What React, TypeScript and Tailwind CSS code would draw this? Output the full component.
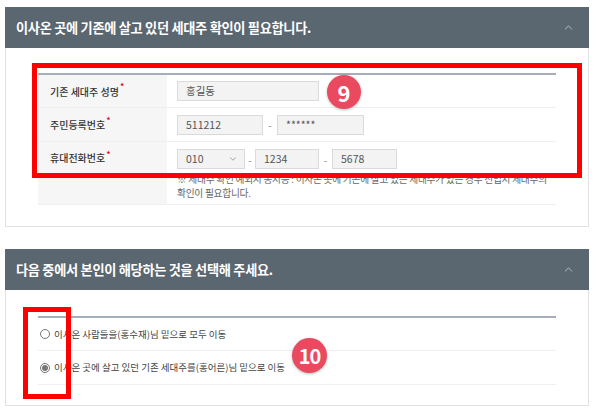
import { ChevronDown, ChevronUp } from "lucide-react";

const font = { fontFamily: '"Noto Sans CJK KR", "Noto Sans", sans-serif' };

const Req = () => <span className="relative -top-[4px] ml-[1px] text-[9px] text-[#e60012]">*</span>;

const Field = ({ value, w }: { value: string; w: string }) => (
  <div className={`${w} flex h-[20px] items-center border border-[#dadada] bg-[#f3f3f3] pl-[8px] text-[10.5px] text-[#555]`}>
    {value}
  </div>
);

const Dash = ({ cls }: { cls: string }) => <span className={`${cls} text-center text-[10px] text-[#888]`}>-</span>;

const PanelHeader = ({ title }: { title: string }) => (
  <div className="flex h-[41px] items-center justify-between bg-[#5a6670] pl-[11px] pr-[14px]">
    <span className="text-[13.2px] font-bold tracking-[-0.3px] text-white">{title}</span>
    <ChevronUp size={13} strokeWidth={1.5} className="text-[#c9cfd4]" />
  </div>
);

export default function App() {
  return (
    <div className="relative h-[419px] w-[603px] overflow-hidden bg-white" style={font}>
      <div className="ml-[5px] w-[584px] pt-[7px]">
        {/* 세대주 확인 */}
        <PanelHeader title="이사온 곳에 기존에 살고 있던 세대주 확인이 필요합니다." />
        <div className="border border-t-0 border-[#e2e2e2] pb-[21px] pl-[32px] pt-[25px]">
          <div className="w-[518px] border-t-2 border-[#a5aebb]">
            <div className="flex h-[33px] border-b border-[#efefef]">
              <div className="flex w-[129px] shrink-0 items-center bg-[#f6f6f6] pl-[12px] text-[10px] font-medium text-[#333]">
                기존 세대주 성명<Req />
              </div>
              <div className="flex flex-1 items-center pl-[10px]">
                <Field value="홍길동" w="w-[142px]" />
              </div>
            </div>
            <div className="flex h-[34px] border-b border-[#efefef]">
              <div className="flex w-[129px] shrink-0 items-center bg-[#f6f6f6] pl-[12px] text-[10px] font-medium text-[#333]">
                주민등록번호<Req />
              </div>
              <div className="flex flex-1 items-center pl-[10px]">
                <Field value="511212" w="w-[86px]" />
                <Dash cls="w-[14px]" />
                <Field value="******" w="w-[87px]" />
              </div>
            </div>
            <div className="flex h-[63px] border-b border-[#efefef]">
              <div className="w-[129px] shrink-0 bg-[#f6f6f6] pl-[12px] pt-[8px] text-[10px] font-medium leading-[16px] text-[#333]">
                휴대전화번호<Req />
              </div>
              <div className="min-w-0 flex-1 pl-[10px] pt-[7px]">
                <div className="flex items-center">
                  <div className="flex h-[20px] w-[68px] items-center justify-between border border-[#dadada] bg-[#f3f3f3] pl-[8px] pr-[6px] text-[10.5px] text-[#555]">
                    010
                    <ChevronDown size={10} strokeWidth={1.6} className="text-[#777]" />
                  </div>
                  <Dash cls="w-[10px]" />
                  <Field value="1234" w="w-[64px]" />
                  <Dash cls="w-[13px]" />
                  <Field value="5678" w="w-[65px]" />
                </div>
                <p className="mt-[3px] text-[9.7px] leading-[14px] tracking-[-0.25px] text-[#666]">
                  ※ 세대주 확인 예외시 동시등 : 이사온 곳에 기존에 살고 있는 세대주가 있는 경우 전입시 세대주의 확인이 필요합니다.
                </p>
              </div>
            </div>
          </div>
        </div>

        {/* 본인 선택 */}
        <div className="mt-[22px]">
          <PanelHeader title="다음 중에서 본인이 해당하는 것을 선택해 주세요." />
          <div className="border border-t-0 border-[#e2e2e2] pb-[20px] pl-[32px] pt-[26px]">
            <div className="w-[518px] border-t-2 border-[#a5aebb]">
              <label className="flex h-[33px] items-center gap-[4px] border-b border-[#efefef] pl-[2px] text-[9.5px] text-[#444]">
                <span className="h-[10px] w-[10px] rounded-full border border-[#777] bg-white" />
                이사온 사람들을(홍수재)님 밑으로 모두 이동
              </label>
              <label className="flex h-[34px] items-center gap-[4px] border-b border-[#efefef] pl-[2px] text-[9.5px] text-[#444]">
                <span className="flex h-[10px] w-[10px] items-center justify-center rounded-full border border-[#777] bg-white">
                  <span className="h-[6px] w-[6px] rounded-full bg-[#777]" />
                </span>
                이사온 곳에 살고 있던 기존 세대주를(홍어른)님 밑으로 이동
              </label>
            </div>
          </div>
        </div>
      </div>

      {/* annotations */}
      <div className="absolute left-[32px] top-[63px] h-[115px] w-[550px] border-[5px] border-[#ff0000]" />
      <div className="absolute left-[23px] top-[307px] h-[92px] w-[48px] border-[5px] border-[#ff0000]" />
      <div className="absolute left-[327px] top-[75px] flex h-[34px] w-[34px] items-center justify-center rounded-full bg-[#ea4a60] text-[22px] font-bold text-white shadow-[0_1px_3px_rgba(0,0,0,0.25)]">
        9
      </div>
      <div className="absolute left-[292px] top-[338px] flex h-[35px] w-[35px] items-center justify-center rounded-full bg-[#ea4a60] text-[20px] font-bold tracking-[-1px] text-white shadow-[0_1px_3px_rgba(0,0,0,0.25)]">
        10
      </div>
    </div>
  );
}
